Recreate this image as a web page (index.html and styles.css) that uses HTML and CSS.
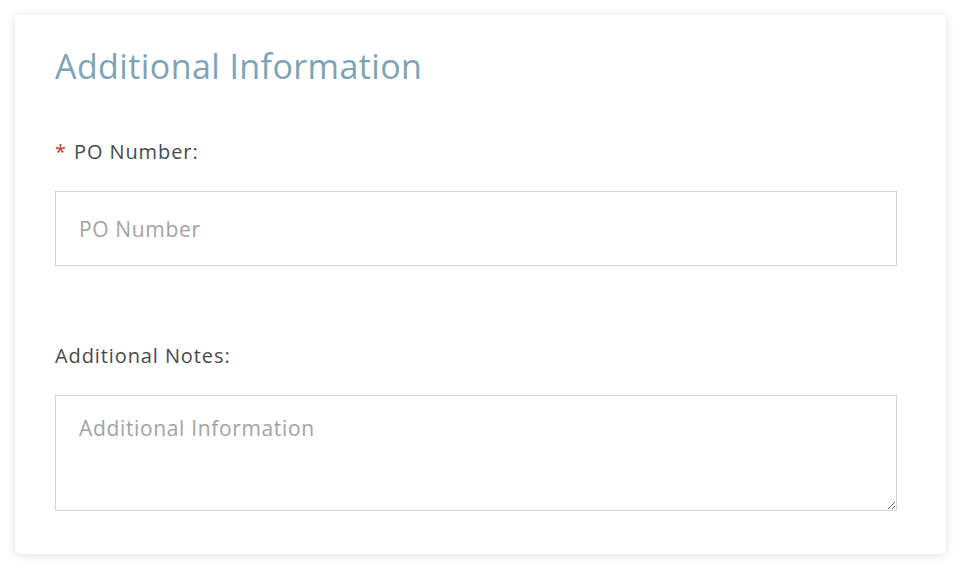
FILE: index.html
```html
<!DOCTYPE html>
<html>
<head>
<meta charset="utf-8">
<link rel="stylesheet" href="styles.css">
</head>
<body>
<div class="card">
  <h2 class="title">Additional Information</h2>
  <div class="field">
    <label class="label"><span class="req">*</span> PO Number:</label>
    <input class="input" type="text" placeholder="PO Number">
  </div>
  <div class="field notes">
    <label class="label">Additional Notes:</label>
    <textarea class="textarea" placeholder="Additional Information"></textarea>
  </div>
</div>
</body>
</html>
```
FILE: styles.css
```css
html, body {
  margin: 0;
  padding: 0;
  background: #ffffff;
}
body {
  padding: 15px 16px 16px 15px;
  font-family: "Open Sans", Lato, sans-serif;
}
.card {
  box-sizing: border-box;
  width: 931px;
  height: 539px;
  background: #fff;
  border-radius: 5px;
  box-shadow: 0 1px 10px rgba(0, 0, 0, 0.12);
  padding: 29px 49px 0 40px;
}
.title {
  margin: 0;
  font-size: 34px;
  letter-spacing: 0.4px;
  font-weight: 400;
  color: #7ea3b6;
  line-height: 44px;
}
.field {
  display: flex;
  flex-direction: column;
  margin-top: 52px;
}
.field.notes {
  margin-top: 78px;
}
.label {
  font-size: 20px;
  letter-spacing: 0.9px;
  color: #4a4a4a;
  line-height: 24px;
  margin-bottom: 27px;
}
.req {
  color: #c0392b;
  margin-right: 1px;
}
.input, .textarea {
  box-sizing: border-box;
  width: 100%;
  border: 1px solid #d4d4d4;
  border-radius: 0;
  font-family: inherit;
  font-size: 21px;
  letter-spacing: 0.65px;
  color: #444;
  padding: 0 23px;
  outline: none;
  margin: 0;
}
.input {
  height: 75px;
}
.textarea {
  height: 116px;
  padding-top: 18px;
  resize: vertical;
  display: block;
}
.input::placeholder, .textarea::placeholder {
  color: #a3a3a3;
}
```
